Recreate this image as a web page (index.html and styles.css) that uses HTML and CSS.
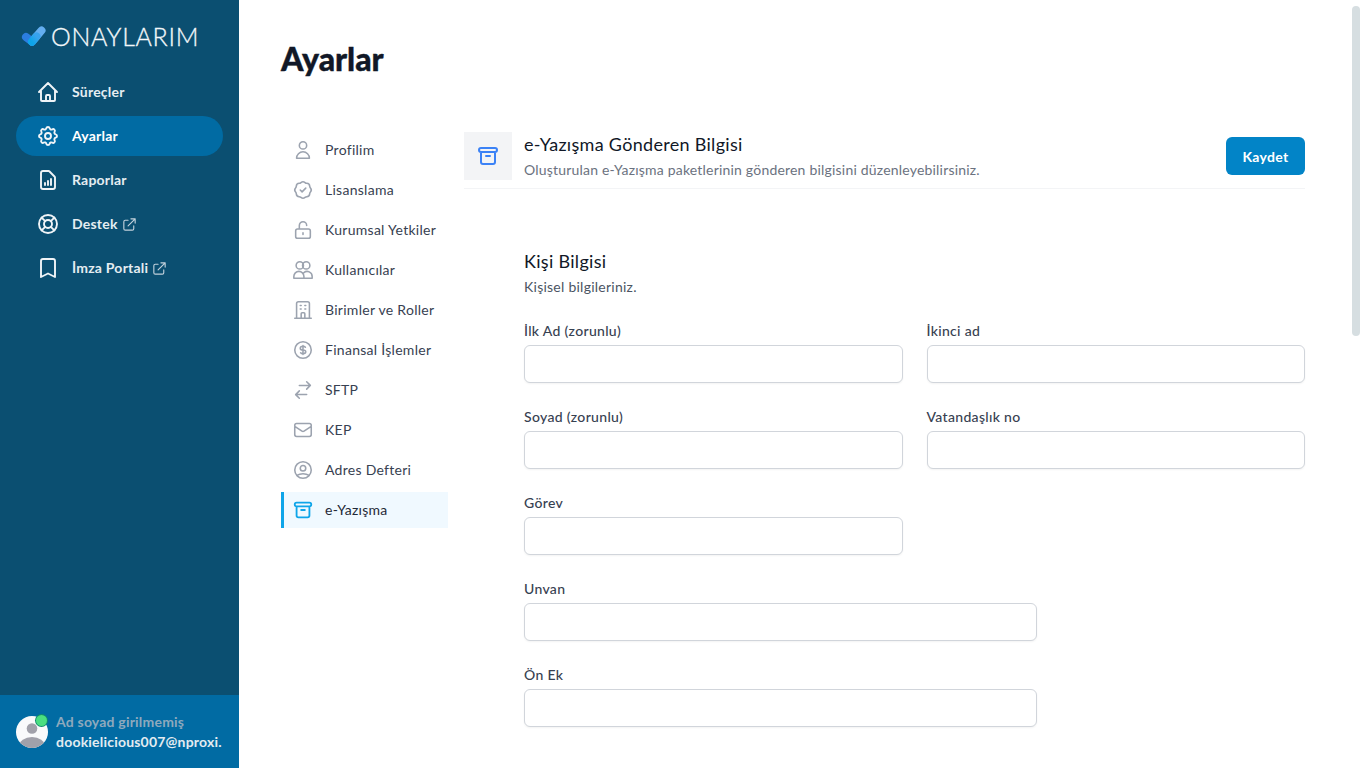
FILE: index.html
```html
<!DOCTYPE html>
<html lang="tr">
<head>
<meta charset="utf-8">
<title>Ayarlar</title>
<link rel="stylesheet" href="styles.css">
</head>
<body>
<div class="app">
  <aside class="sidebar">
    <div class="logo">
      <svg class="logo-mark" width="26" height="22" viewBox="0 0 26 22">
        <defs><linearGradient id="lg" x1="0" y1="1" x2="1" y2="0"><stop offset="0" stop-color="#0ea5e9"/><stop offset="1" stop-color="#38a3ee"/></linearGradient></defs>
        <path d="M11 16.7 L20.5 5.5" stroke="#64aef0" stroke-width="8" stroke-linecap="round" fill="none"/>
        <path d="M5 12 L11 16.7" stroke="#2b7de0" stroke-width="8" stroke-linecap="round" fill="none"/>
        <path d="M11 16.7 L15.5 11.4" stroke="url(#lg)" stroke-width="8" stroke-linecap="round" fill="none"/>
      </svg>
      <span class="logo-text">ONAYLARIM</span>
    </div>
    <nav class="nav">
      <a class="nav-item"><svg class="nav-icon" viewBox="0 0 24 24"><path d="M3 12l2-2m0 0l7-7 7 7m-14 0v10a1 1 0 001 1h3m10-11l2 2m-2-2v10a1 1 0 01-1 1h-3m-6 0a1 1 0 001-1v-4a1 1 0 011-1h2a1 1 0 011 1v4a1 1 0 001 1m-6 0h6"/></svg><span>Süreçler</span></a>
      <a class="nav-item active"><svg class="nav-icon" viewBox="0 0 24 24"><path d="M10.325 4.317c.426-1.756 2.924-1.756 3.35 0a1.724 1.724 0 002.573 1.066c1.543-.94 3.31.826 2.37 2.37a1.724 1.724 0 001.065 2.572c1.756.426 1.756 2.924 0 3.35a1.724 1.724 0 00-1.066 2.573c.94 1.543-.826 3.31-2.37 2.37a1.724 1.724 0 00-2.572 1.065c-.426 1.756-2.924 1.756-3.35 0a1.724 1.724 0 00-2.573-1.066c-1.543.94-3.31-.826-2.37-2.37a1.724 1.724 0 00-1.065-2.572c-1.756-.426-1.756-2.924 0-3.35a1.724 1.724 0 001.066-2.573c-.94-1.543.826-3.31 2.37-2.37.996.608 2.296.07 2.572-1.065z"/><path d="M15 12a3 3 0 11-6 0 3 3 0 016 0z"/></svg><span>Ayarlar</span></a>
      <a class="nav-item"><svg class="nav-icon" viewBox="0 0 24 24"><path d="M9 17v-2m3 2v-4m3 4v-6m2 10H7a2 2 0 01-2-2V5a2 2 0 012-2h5.586a1 1 0 01.707.293l5.414 5.414a1 1 0 01.293.707V19a2 2 0 01-2 2z"/></svg><span>Raporlar</span></a>
      <a class="nav-item"><svg class="nav-icon" viewBox="0 0 24 24"><circle cx="12" cy="12" r="9"/><circle cx="12" cy="12" r="4"/><path d="M5.6 5.6l3.6 3.6m5.6 5.6l3.6 3.6m0-12.8l-3.6 3.6m-5.6 5.6l-3.6 3.6"/></svg><span>Destek</span><svg class="ext-icon" viewBox="0 0 24 24"><path d="M10 6H6a2 2 0 00-2 2v10a2 2 0 002 2h10a2 2 0 002-2v-4M14 4h6m0 0v6m0-6L10 14"/></svg></a>
      <a class="nav-item"><svg class="nav-icon" viewBox="0 0 24 24"><path d="M5 5a2 2 0 012-2h10a2 2 0 012 2v16l-7-3.5L5 21V5z"/></svg><span>İmza Portali</span><svg class="ext-icon" viewBox="0 0 24 24"><path d="M10 6H6a2 2 0 00-2 2v10a2 2 0 002 2h10a2 2 0 002-2v-4M14 4h6m0 0v6m0-6L10 14"/></svg></a>
    </nav>
    <div class="user">
      <div class="avatar">
        <svg width="32" height="32" viewBox="0 0 32 32"><defs><clipPath id="ac"><circle cx="16" cy="16" r="16"/></clipPath></defs><circle cx="16" cy="16" r="16" fill="#f9fafb"/><g clip-path="url(#ac)" fill="#a1a1aa"><circle cx="16" cy="12.5" r="5.3"/><ellipse cx="16" cy="30" rx="13" ry="9"/></g></svg>
        <span class="status"></span>
      </div>
      <div class="user-text">
        <div class="user-name">Ad soyad girilmemiş</div>
        <div class="user-mail">dookielicious007@nproxi.</div>
      </div>
    </div>
  </aside>
  <main class="main">
    <h1 class="page-title">Ayarlar</h1>
    <div class="settings">
      <nav class="subnav">
        <a class="sub-item"><svg class="sub-icon" viewBox="0 0 24 24"><path d="M16 7a4 4 0 11-8 0 4 4 0 018 0zM12 14a7 7 0 00-7 7h14a7 7 0 00-7-7z"/></svg><span>Profilim</span></a>
        <a class="sub-item"><svg class="sub-icon" viewBox="0 0 24 24"><path d="M9 12l2 2 4-4M7.835 4.697a3.42 3.42 0 001.946-.806 3.42 3.42 0 014.438 0 3.42 3.42 0 001.946.806 3.42 3.42 0 013.138 3.138 3.42 3.42 0 00.806 1.946 3.42 3.42 0 010 4.438 3.42 3.42 0 00-.806 1.946 3.42 3.42 0 01-3.138 3.138 3.42 3.42 0 00-1.946.806 3.42 3.42 0 01-4.438 0 3.42 3.42 0 00-1.946-.806 3.42 3.42 0 01-3.138-3.138 3.42 3.42 0 00-.806-1.946 3.42 3.42 0 010-4.438 3.42 3.42 0 00.806-1.946 3.42 3.42 0 013.138-3.138z"/></svg><span>Lisanslama</span></a>
        <a class="sub-item"><svg class="sub-icon" viewBox="0 0 24 24"><path d="M8 11V7a4 4 0 118 0m-4 8v2m-6 4h12a2 2 0 002-2v-6a2 2 0 00-2-2H6a2 2 0 00-2 2v6a2 2 0 002 2z"/></svg><span>Kurumsal Yetkiler</span></a>
        <a class="sub-item"><svg class="sub-icon" viewBox="0 0 24 24"><circle cx="8.5" cy="7" r="4"/><circle cx="15.5" cy="7" r="4"/><path d="M2 21v-2a5.5 5.5 0 0111 0v2H2zM13 21h9v-2a5.5 5.5 0 00-9-4.2"/></svg><span>Kullanıcılar</span></a>
        <a class="sub-item"><svg class="sub-icon" viewBox="0 0 24 24"><path d="M19 21V5a2 2 0 00-2-2H7a2 2 0 00-2 2v16m14 0h2m-2 0h-5m-9 0H3m2 0h5M9 7h1m-1 4h1m4-4h1m-1 4h1m-5 10v-5a1 1 0 011-1h2a1 1 0 011 1v5m-4 0h4"/></svg><span>Birimler ve Roller</span></a>
        <a class="sub-item"><svg class="sub-icon" viewBox="0 0 24 24"><path d="M12 8c-1.657 0-3 .895-3 2s1.343 2 3 2 3 .895 3 2-1.343 2-3 2m0-8c1.11 0 2.08.402 2.599 1M12 8V7m0 1v8m0 0v1m0-1c-1.11 0-2.08-.402-2.599-1M21 12a9 9 0 11-18 0 9 9 0 0118 0z"/></svg><span>Finansal İşlemler</span></a>
        <a class="sub-item"><svg class="sub-icon" viewBox="0 0 24 24"><path d="M8 7h12m0 0l-4-4m4 4l-4 4m0 6H4m0 0l4 4m-4-4l4-4"/></svg><span>SFTP</span></a>
        <a class="sub-item"><svg class="sub-icon" viewBox="0 0 24 24"><path d="M3 8l7.89 5.26a2 2 0 002.22 0L21 8M5 19h14a2 2 0 002-2V7a2 2 0 00-2-2H5a2 2 0 00-2 2v10a2 2 0 002 2z"/></svg><span>KEP</span></a>
        <a class="sub-item"><svg class="sub-icon" viewBox="0 0 24 24"><path d="M5.121 17.804A13.937 13.937 0 0112 16c2.5 0 4.847.655 6.879 1.804M15 10a3 3 0 11-6 0 3 3 0 016 0zm6 2a9 9 0 11-18 0 9 9 0 0118 0z"/></svg><span>Adres Defteri</span></a>
        <a class="sub-item current"><svg class="sub-icon" viewBox="0 0 24 24"><path d="M5 8h14M5 8a2 2 0 110-4h14a2 2 0 110 4M5 8v10a2 2 0 002 2h10a2 2 0 002-2V8m-9 4h4"/></svg><span>e-Yazışma</span></a>
      </nav>
      <section class="panel">
        <header class="panel-head">
          <div class="panel-icon"><svg viewBox="0 0 24 24"><path d="M5 8h14M5 8a2 2 0 110-4h14a2 2 0 110 4M5 8v10a2 2 0 002 2h10a2 2 0 002-2V8m-9 4h4"/></svg></div>
          <div class="panel-title">
            <h2>e-Yazışma Gönderen Bilgisi</h2>
            <p>Oluşturulan e-Yazışma paketlerinin gönderen bilgisini düzenleyebilirsiniz.</p>
          </div>
          <button class="save" type="button">Kaydet</button>
        </header>
        <form class="form">
          <h3>Kişi Bilgisi</h3>
          <p class="form-sub">Kişisel bilgileriniz.</p>
          <div class="fields">
            <label class="field half"><span>İlk Ad (zorunlu)</span><input type="text"></label>
            <label class="field half"><span>İkinci ad</span><input type="text"></label>
            <label class="field half"><span>Soyad (zorunlu)</span><input type="text"></label>
            <label class="field half"><span>Vatandaşlık no</span><input type="text"></label>
            <label class="field half break"><span>Görev</span><input type="text"></label>
            <label class="field wide break"><span>Unvan</span><input type="text"></label>
            <label class="field wide break"><span>Ön Ek</span><input type="text"></label>
          </div>
        </form>
      </section>
    </div>
  </main>
  <div class="scroll-thumb"></div>
</div>
</body>
</html>
```
FILE: styles.css
```css
* { box-sizing: border-box; }
html, body { margin: 0; height: 100%; overflow: hidden; }
body { font-family: Lato, "Liberation Sans", sans-serif; background: #fff; color: #111827; }
h1, h2, h3, p { margin: 0; }

.app { display: flex; height: 768px; width: 1366px; overflow: hidden; position: relative; }

.sidebar { width: 239px; flex: none; height: 768px; background: #0b4f71; display: flex; flex-direction: column; }
.logo { height: 72px; padding: 25px 0 0 21px; display: flex; align-items: flex-start; gap: 4px; }
.logo-text { font-family: Lato, sans-serif; font-weight: 300; font-size: 25px; line-height: 22px; letter-spacing: 0.7px; color: #f3f7fa; -webkit-text-stroke: 0.3px #f3f7fa; }

.nav { flex: 1; padding: 0 16px; display: flex; flex-direction: column; gap: 4px; }
.nav-item { height: 40px; width: 207px; border-radius: 20px; display: flex; align-items: center; padding-left: 20px; color: #e5edf2; font-size: 14px; font-weight: 700; letter-spacing: 0.22px; }
.nav-item span { padding-bottom: 2px; }
.nav-item.active { background: #016ba3; color: #fff; }
.nav-icon { width: 24px; height: 24px; margin-right: 12px; fill: none; stroke: #f0f4f7; stroke-width: 1.9; stroke-linecap: round; stroke-linejoin: round; flex: none; }
.ext-icon { width: 17px; height: 17px; margin-left: 3px; fill: none; stroke: #c3d2dc; stroke-width: 1.6; stroke-linecap: round; stroke-linejoin: round; }

.user { height: 73px; background: #016ba3; display: flex; align-items: center; padding-left: 16px; gap: 8px; }
.avatar { position: relative; width: 32px; height: 32px; flex: none; }
.avatar svg { display: block; }
.status { position: absolute; top: -1px; left: 20px; width: 11px; height: 11px; border-radius: 50%; background: #4ade80; box-shadow: 0 0 0 1px #0f8a6a; }
.user-text { font-size: 14px; line-height: 20px; white-space: nowrap; font-weight: 700; letter-spacing: 0.2px; }
.user-name { color: #8ea9bd; }
.user-mail { color: #e3ebf1; }

.main { flex: 1; padding: 41px 0 0 42px; min-width: 0; }
.page-title { font-size: 32px; font-weight: 900; line-height: 36px; color: #111827; margin-bottom: 55px; -webkit-text-stroke: 0.4px #111827; }

.settings { display: flex; align-items: flex-start; width: 1024px; }
.subnav { width: 167px; flex: none; display: flex; flex-direction: column; gap: 4px; }
.sub-item { height: 36px; display: flex; align-items: center; border-left: 3px solid transparent; padding-left: 8px; font-size: 14px; font-weight: 400; color: #374151; letter-spacing: 0.28px; }
.sub-item span { padding-bottom: 2px; }
.sub-item.current { background: #f0f9ff; border-left-color: #0ea5e9; color: #1f2937; }
.sub-icon { width: 22px; height: 22px; margin-right: 11px; fill: none; stroke: #9ca3af; stroke-width: 1.7; stroke-linecap: round; stroke-linejoin: round; flex: none; }
.current .sub-icon { stroke: #0ea5e9; stroke-width: 2; }

.panel { width: 841px; margin-left: 16px; flex: none; }
.panel-head { display: flex; align-items: flex-start; height: 57px; border-bottom: 1px solid #f3f4f6; }
.panel-icon { width: 48px; height: 48px; background: #f3f4f6; display: flex; align-items: center; justify-content: center; flex: none; }
.panel-icon svg { width: 24px; height: 24px; fill: none; stroke: #3b82f6; stroke-width: 2; stroke-linecap: round; stroke-linejoin: round; }
.panel-title { flex: 1; margin-left: 12px; }
.panel-title h2 { font-size: 18px; line-height: 24px; font-weight: 400; color: #111827; letter-spacing: 0.3px; }
.panel-title p { font-size: 14px; line-height: 20px; margin-top: 4px; color: #6b7280; letter-spacing: 0.2px; }
.save { width: 79px; height: 38px; margin-top: 5px; background: #0284c7; border: 0; border-radius: 6px; color: #fff; font-family: inherit; font-size: 14px; font-weight: 700; letter-spacing: 0.3px; padding: 0; }

.form { padding: 60px 0 0 60px; }
.form h3 { font-size: 18px; line-height: 24px; font-weight: 400; color: #111827; letter-spacing: 0.3px; }
.form-sub { font-size: 14px; line-height: 20px; margin-top: 4px; color: #4b5563; letter-spacing: 0.25px; }
.fields { display: grid; grid-template-columns: repeat(6, 1fr); gap: 24px; margin-top: 24px; }
.field { display: block; }
.field span { display: block; font-size: 14px; line-height: 20px; font-weight: 500; color: #374151; margin-bottom: 4px; letter-spacing: 0.32px; }
.field input { display: block; width: 100%; height: 38px; border: 1px solid #d1d5db; border-radius: 6px; background: #fff; box-shadow: 0 1px 2px rgba(0,0,0,.05); outline: 0; }
.half { grid-column: span 3; }
.wide { grid-column: span 4; }
.half.break { grid-column: 1 / span 3; }
.wide.break { grid-column: 1 / span 4; }

.scroll-thumb { position: absolute; left: 1352px; top: 6px; width: 8px; height: 330px; border-radius: 4px; background: #d6dee1; }
```
